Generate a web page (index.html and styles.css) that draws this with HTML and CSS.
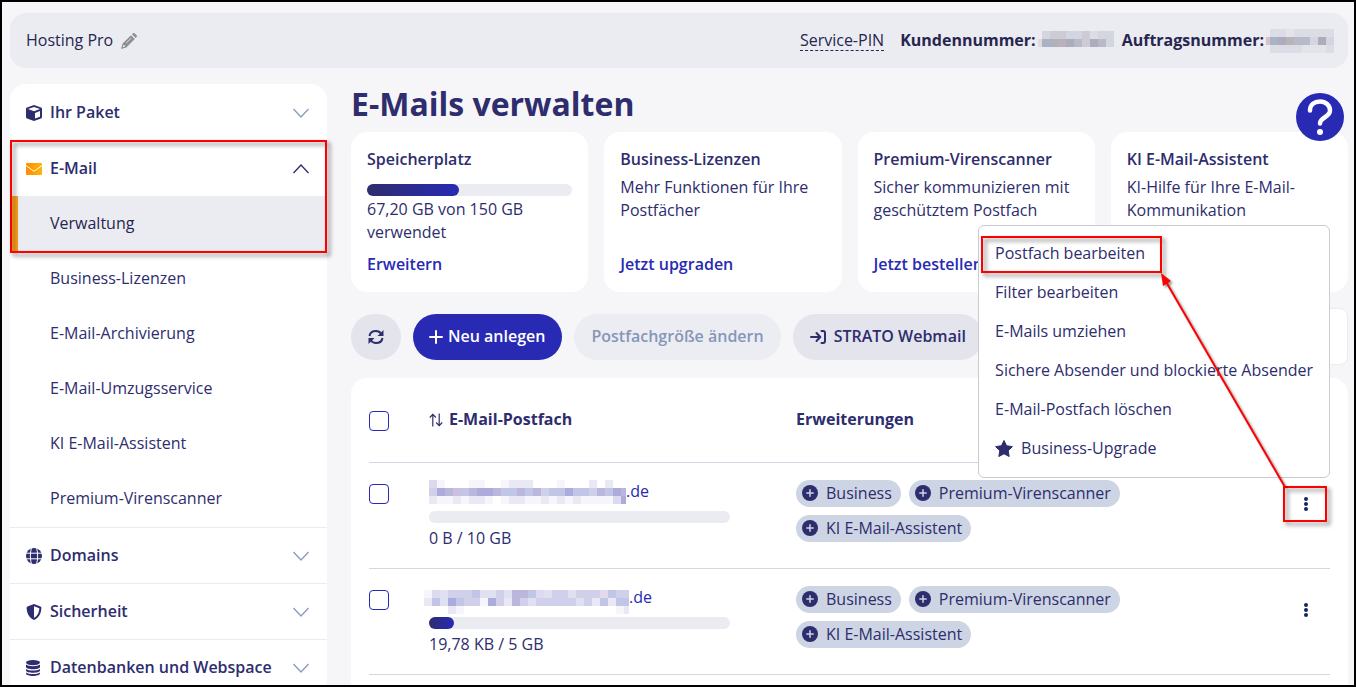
FILE: index.html
```html
<!DOCTYPE html>
<html lang="de">
<head>
    <meta charset="UTF-8">
    <meta name="viewport" content="width=device-width, initial-scale=1.0">
    <title>E-Mails verwalten</title>
    <link rel="stylesheet" href="styles.css">
</head>
<body>
    <!-- Icons -->
    <svg class="icon-defs" aria-hidden="true">
        <symbol id="chevron" viewBox="0 0 16 16"><path d="M0.5 4L8 12L15.5 4" fill="none" stroke="currentColor" stroke-width="1.3"/></symbol>
        <symbol id="plus-circle" viewBox="0 0 16 16"><circle cx="8" cy="8" r="8" fill="currentColor"/><path d="M8 4.8V11.2M4.8 8H11.2" stroke="#cdd4e3" stroke-width="1.5" stroke-linecap="round"/></symbol>
        <symbol id="kebab" viewBox="0 0 4 14"><circle cx="2" cy="2" r="2"/><circle cx="2" cy="7" r="2"/><circle cx="2" cy="12" r="2"/></symbol>
    </svg>

    <div class="page">
        <header class="topbar">
            <div class="package-name">
                Hosting Pro
                <button class="edit-btn" type="button" aria-label="Bearbeiten">
                    <svg viewBox="0 0 16 16" width="16" height="16" fill="#8f9096"><path d="M10.900 1.300l1-.9c.6-.5 1.300-.5 1.900 0l1.800 1.800c.5.6.5 1.300 0 1.900l-1 1zM10 2.200l3.800 3.800-8.500 8.400L0 16l1.600-5.400zM2.400 11.900l-.7 2.300 2.300-.7-.3-1.200-1.100-.2z" fill-rule="evenodd"/><path d="M5 10.200l5-5" stroke="#ebecf2" stroke-width=".8"/></svg>
                </button>
            </div>
            <div class="customer-data">
                <a class="service-pin" href="#">Service-PIN</a>
                <strong>Kundennummer:</strong>
                <span class="mosaic number-a" data-rows=".ijjiijnii plqrokjoki"></span>
                <strong>Auftragsnummer:</strong>
                <span class="mosaic number-b" data-rows=".nnmnnnnn slorkkioi .nnnnmmmn"></span>
            </div>
        </header>

        <div class="layout">
            <nav class="sidebar">
                <section class="nav-group">
                    <button class="nav-head" type="button">
                        <svg class="icon" viewBox="0 0 16 16"><path d="M8 0l7 2.400c.6.200 1 .7 1 1.300v8.600c0 .6-.4 1.100-1 1.300L8 16l-7-2.400c-.6-.2-1-.7-1-1.300V3.700c0-.6.400-1.100 1-1.300z" fill="currentColor"/><path d="M2 4l6-2.100L14 4 8 6.300zM9 8l5-1.900v5.700L9 13.600z" fill="#fff"/></svg>
                        <span>Ihr Paket</span>
                        <svg class="chevron"><use href="#chevron"/></svg>
                    </button>
                </section>
                <section class="nav-group open">
                    <button class="nav-head" type="button" aria-expanded="true">
                        <svg class="icon" viewBox="0 0 16 16"><defs><linearGradient id="orange"><stop stop-color="#ff8c00"/><stop offset="1" stop-color="#ffb40a"/></linearGradient></defs><rect y="2" width="16" height="12" rx="1" fill="url(#orange)"/><path d="M0 4.500L7 9.700q1 .7 2 0L16 4.500" fill="none" stroke="#fff" stroke-width="1"/></svg>
                        <span>E-Mail</span>
                        <svg class="chevron"><use href="#chevron"/></svg>
                    </button>
                    <ul class="nav-list">
                        <li><a class="active" href="#">Verwaltung</a></li>
                        <li><a href="#">Business-Lizenzen</a></li>
                        <li><a href="#">E-Mail-Archivierung</a></li>
                        <li><a href="#">E-Mail-Umzugsservice</a></li>
                        <li><a href="#">KI E-Mail-Assistent</a></li>
                        <li><a href="#">Premium-Virenscanner</a></li>
                    </ul>
                    <span class="marker marker-nav"></span>
                </section>
                <section class="nav-group">
                    <button class="nav-head" type="button">
                        <svg class="icon" viewBox="0 0 16 16"><circle cx="8" cy="8" r="8" fill="currentColor"/><path d="M0 5.200H16M0 10.800H16M5.400 0C4 5 4 11 5.400 16M10.600 0C12 5 12 11 10.600 16" fill="none" stroke="#fff"/></svg>
                        <span>Domains</span>
                        <svg class="chevron"><use href="#chevron"/></svg>
                    </button>
                </section>
                <section class="nav-group">
                    <button class="nav-head" type="button">
                        <svg class="icon" viewBox="0 0 16 16"><path d="M8 0l6.500 2.600c.5.200.9.600.9 1.200C15.300 8.500 13.500 13.500 8 16 2.500 13.500.7 8.500.6 3.800c0-.6.400-1 .9-1.200z" fill="currentColor"/><path d="M8 2.200l5.300 2.100C13.200 8 11.800 11.800 8 13.800z" fill="#fff"/></svg>
                        <span>Sicherheit</span>
                        <svg class="chevron"><use href="#chevron"/></svg>
                    </button>
                </section>
                <section class="nav-group">
                    <button class="nav-head" type="button">
                        <svg class="icon" viewBox="0 0 16 16" fill="currentColor"><ellipse cx="7" cy="2.600" rx="7" ry="2.600"/><path d="M0 4.600c3 2.100 11 2.100 14 0v2.300c0 3-14 3-14 0zM0 9c3 2.100 11 2.100 14 0v1.500c0 3-14 3-14 0zM0 12.500c3 2.100 11 2.100 14 0v1c0 3.300-14 3.300-14 0z"/></svg>
                        <span>Datenbanken und Webspace</span>
                        <svg class="chevron"><use href="#chevron"/></svg>
                    </button>
                </section>
            </nav>

            <main class="content">
                <h1>E-Mails verwalten</h1>
                <button class="help-btn" type="button" aria-label="Hilfe">
                    <svg viewBox="0 0 48 48" width="48" height="48"><path d="M14 17.500C14 11.500 18.500 8.500 24 8.500s10 3.500 10 9c0 7-10 6.500-10 13" fill="none" stroke="#fff" stroke-width="4.500" stroke-linecap="round"/><circle cx="24" cy="39" r="3" fill="#fff"/></svg>
                </button>

                <div class="cards">
                    <section class="card">
                        <h2>Speicherplatz</h2>
                        <div class="bar"><div class="bar-fill" style="width: 44.8%"></div></div>
                        <p>67,20 GB von 150 GB verwendet</p>
                        <a href="#">Erweitern</a>
                    </section>
                    <section class="card">
                        <h2>Business-Lizenzen</h2>
                        <p>Mehr Funktionen für Ihre Postfächer</p>
                        <a href="#">Jetzt upgraden</a>
                    </section>
                    <section class="card">
                        <h2>Premium-Virenscanner</h2>
                        <p>Sicher kommunizieren mit geschütztem Postfach</p>
                        <a href="#">Jetzt bestellen</a>
                    </section>
                    <section class="card">
                        <h2>KI E-Mail-Assistent</h2>
                        <p>KI-Hilfe für Ihre E-Mail-Kommunikation</p>
                        <a href="#">Jetzt bestellen</a>
                    </section>
                </div>

                <div class="toolbar">
                    <button class="btn btn-round" type="button" aria-label="Aktualisieren">
                        <svg viewBox="0 0 16 16" width="16" height="16" fill="none" stroke="currentColor" stroke-width="2"><path d="M1.500 7C2 3.700 4.700 2 8 2c2.300 0 4.200 1.100 5.500 3M14.500 9C14 12.300 11.300 14 8 14c-2.300 0-4.200-1.100-5.500-3"/><path d="M15.500 1v6H9.500zM.5 15V9h6z" fill="currentColor" stroke="none"/></svg>
                    </button>
                    <button class="btn btn-primary" type="button">
                        <svg viewBox="0 0 14 14" width="14" height="14"><path d="M7 1V13M1 7H13" stroke="currentColor" stroke-width="2" stroke-linecap="round"/></svg>
                        Neu anlegen
                    </button>
                    <button class="btn" type="button" disabled>Postfachgröße ändern</button>
                    <button class="btn btn-webmail" type="button">
                        <svg viewBox="0 0 16 14" width="16" height="14" fill="none" stroke="currentColor" stroke-width="2" stroke-linecap="round" stroke-linejoin="round"><path d="M1 7H10M6.500 3L10.300 7 6.500 11M11.500 1H13q2 0 2 2V11q0 2-2 2H11.500"/></svg>
                        STRATO Webmail
                    </button>
                    <input class="search" type="search" aria-label="Suche">
                </div>

                <div class="table-card">
                    <table class="mailboxes">
                        <colgroup>
                            <col class="col-check">
                            <col class="col-mailbox">
                            <col>
                            <col class="col-actions">
                        </colgroup>
                        <thead>
                            <tr>
                                <th><input type="checkbox" aria-label="Alle auswählen"></th>
                                <th>
                                    <button class="sort-btn" type="button">
                                        <svg viewBox="0 0 14 14" width="14" height="14" fill="none" stroke="currentColor" stroke-width="1.200"><path d="M3.800 13.500V1.500M.8 4.500l3-3.200 3 3.200M10.200.5V12.500M7.200 9.500l3 3.200 3-3.200"/></svg>
                                        E-Mail-Postfach
                                    </button>
                                </th>
                                <th>Erweiterungen</th>
                                <th></th>
                            </tr>
                        </thead>
                        <tbody>
                            <tr>
                                <td><input type="checkbox" aria-label="Postfach 1 auswählen"></td>
                                <td>
                                    <a class="mail" href="#"><span class="mosaic mail-a" data-rows="ca...aa..abbb...a...b.b.. dgftefggfeefefdeegeedfegff baababba.abbaabababaaaacg"></span>.de</a>
                                    <div class="bar"></div>
                                    <div class="quota">0 B / 10 GB</div>
                                </td>
                                <td>
                                    <div class="chips">
                                        <button class="chip" type="button"><svg><use href="#plus-circle"/></svg>Business</button>
                                        <button class="chip" type="button"><svg><use href="#plus-circle"/></svg>Premium-Virenscanner</button>
                                        <button class="chip" type="button"><svg><use href="#plus-circle"/></svg>KI E-Mail-Assistent</button>
                                    </div>
                                </td>
                                <td>
                                    <div class="actions">
                                        <button class="kebab" type="button" aria-label="Aktionen" aria-expanded="true"><svg><use href="#kebab"/></svg></button>
                                        <span class="marker"></span>
                                        <ul class="menu">
                                            <li><a href="#">Postfach bearbeiten</a><span class="marker marker-menu"></span></li>
                                            <li><a href="#">Filter bearbeiten</a></li>
                                            <li><a href="#">E-Mails umziehen</a></li>
                                            <li><a href="#">Sichere Absender und blockierte Absender</a></li>
                                            <li><a href="#">E-Mail-Postfach löschen</a></li>
                                            <li><a href="#"><svg viewBox="0 0 18 17" width="18" height="17"><path d="M9 .5l2.600 5.300 5.800.8-4.200 4.100 1 5.800L9 13.800l-5.200 2.700 1-5.800L.6 6.600l5.800-.8z" fill="currentColor" stroke="currentColor" stroke-linejoin="round"/></svg>Business-Upgrade</a></li>
                                        </ul>
                                        <svg class="arrow" viewBox="0 0 124 214"><path d="M124 214L4 7" stroke="#f00" stroke-width="2"/><path d="M0 0L10 8 2 13z" fill="#f00"/></svg>
                                    </div>
                                </td>
                            </tr>
                            <tr>
                                <td><input type="checkbox" aria-label="Postfach 2 auswählen"></td>
                                <td>
                                    <a class="mail" href="#"><span class="mosaic mail-b" data-rows="achdddehhdhffechddhddduedd behgeddagdbfdhdddddhdbebee ...ba...................ab"></span>.de</a>
                                    <div class="bar"><div class="bar-fill bar-min"></div></div>
                                    <div class="quota">19,78 KB / 5 GB</div>
                                </td>
                                <td>
                                    <div class="chips">
                                        <button class="chip" type="button"><svg><use href="#plus-circle"/></svg>Business</button>
                                        <button class="chip" type="button"><svg><use href="#plus-circle"/></svg>Premium-Virenscanner</button>
                                        <button class="chip" type="button"><svg><use href="#plus-circle"/></svg>KI E-Mail-Assistent</button>
                                    </div>
                                </td>
                                <td>
                                    <div class="actions">
                                        <button class="kebab" type="button" aria-label="Aktionen"><svg><use href="#kebab"/></svg></button>
                                    </div>
                                </td>
                            </tr>
                        </tbody>
                    </table>
                </div>
            </main>
        </div>
    </div>
    <script src="script.js"></script>
</body>
</html>
```
FILE: styles.css
```css
* {
    box-sizing: border-box;
}

body {
    margin: 0;
    font-family: "Open Sans", "Noto Sans", sans-serif;
    font-size: 16px;
    line-height: 23px;
    color: #2e2d6e;
    background-color: #f6f6f9;
}

button,
input {
    font: inherit;
    color: inherit;
}

button {
    border: 0;
    padding: 0;
    background: none;
    cursor: pointer;
}

a {
    color: inherit;
    text-decoration: none;
}

ul {
    list-style: none;
    margin: 0;
    padding: 0;
}

svg {
    display: block;
    flex: none;
}

.icon-defs {
    position: absolute;
    width: 0;
    height: 0;
}

.page {
    height: 100vh;
    overflow: hidden;
    border: 2px solid #000;
    padding: 11px 6px 0 8px;
}

/* Kopfzeile */
.topbar {
    display: flex;
    justify-content: space-between;
    align-items: center;
    height: 55px;
    padding: 0 14px 0 16px;
    border-radius: 16px;
    background-color: #ebecf2;
    color: #27264f;
}

.package-name,
.customer-data {
    display: flex;
    align-items: center;
}

.package-name {
    gap: 8px;
}

.service-pin {
    border-bottom: 1px dashed #27264f;
    line-height: 19px;
    margin-right: 16px;
}

.mosaic {
    display: flex;
    overflow: hidden;
}

.mosaic svg {
    shape-rendering: crispEdges;
}

.number-a,
.number-b {
    justify-content: flex-end;
}

.number-a {
    width: 76px;
    margin: 0 8px 4px 2px;
}

.number-b {
    width: 68px;
    margin-left: 2px;
}

.layout {
    display: grid;
    grid-template-columns: 317px minmax(0, 1fr);
    align-items: start;
    gap: 24px;
    margin-top: 16px;
}

/* Navigation */
.sidebar {
    padding-top: 1px;
    border-radius: 16px;
    background-color: #fff;
}

.nav-group {
    position: relative;
}

.nav-group + .nav-group {
    border-top: 1px solid #ebebed;
}

.nav-group.open {
    z-index: 1;
}

.nav-head {
    display: flex;
    align-items: center;
    gap: 8px;
    width: 100%;
    height: 55px;
    padding: 0 18px 0 16px;
    font-weight: 600;
    text-align: left;
}

.nav-head span {
    flex: 1;
}

.icon,
.chevron {
    width: 16px;
    height: 16px;
}

.chevron {
    color: #8a9abf;
}

.open .chevron {
    color: #2e2d6e;
    transform: rotate(180deg);
}

.nav-list {
    padding-bottom: 1px;
}

.nav-list a {
    display: flex;
    align-items: center;
    height: 55px;
    padding-left: 40px;
}

.nav-list .active {
    padding-left: 32px;
    border-left: 8px solid #ffa41f;
    background-color: #ebecf2;
    color: #27264f;
}

/* Rote Hervorhebung */
.marker {
    position: absolute;
    inset: 0;
    border: 2px solid #f00;
    filter: drop-shadow(3px 3px 2px rgba(0, 0, 0, 0.5));
    pointer-events: none;
}

.marker-nav {
    top: -1px;
    bottom: auto;
    height: 113px;
}

/* Inhalt */
.content {
    position: relative;
}

h1 {
    margin: 0 0 8px;
    font-size: 32px;
    line-height: 40px;
    font-weight: 700;
}

.help-btn {
    position: absolute;
    top: 9px;
    right: 4px;
    border-radius: 50%;
    background-color: #282ab4;
}

.cards {
    display: grid;
    grid-template-columns: repeat(4, minmax(0, 1fr));
    gap: 16px;
}

.card {
    display: flex;
    flex-direction: column;
    align-items: flex-start;
    min-height: 160px;
    padding: 16px;
    border-radius: 16px;
    background-color: #fff;
}

.card h2 {
    margin: 0 0 5px;
    font-size: 16px;
    line-height: 23px;
    font-weight: 600;
}

.card p {
    margin: 0;
}

.card a {
    margin-top: auto;
    font-weight: 600;
    color: #282ab4;
}

.bar {
    width: 100%;
    height: 12px;
    border-radius: 6px;
    background-color: #ebecf2;
}

.card .bar {
    margin: 8px 0 2px;
}

.bar-fill {
    height: 100%;
    border-radius: 6px;
    background: linear-gradient(90deg, #2e2d6e, #282ab4);
}

.bar-min {
    width: 25px;
}

.toolbar {
    display: flex;
    align-items: center;
    gap: 12px;
    margin: 16px 0 13px;
}

.btn {
    display: flex;
    align-items: center;
    gap: 5px;
    height: 46px;
    padding: 0 17px;
    border-radius: 23px;
    background-color: #e3e4ec;
    font-weight: 600;
    white-space: nowrap;
}

.btn-primary {
    padding: 0 17px 0 16px;
    background-color: #282ab4;
    color: #fff;
}

.btn-webmail {
    gap: 8px;
}

.btn:disabled {
    background-color: #ecedf2;
    color: #8696b8;
}

.search {
    flex: 1;
    min-width: 0;
    height: 57px;
    padding: 0 16px;
    border: 1px solid #ebecf2;
    border-radius: 8px;
    background-color: #fff;
}

/* Postfachtabelle */
.table-card {
    padding: 0 18px 40px;
    border-radius: 16px;
    background-color: #fff;
}

.mailboxes {
    width: 100%;
    table-layout: fixed;
    border-collapse: collapse;
}

.col-check {
    width: 60px;
}

.col-mailbox {
    width: 367px;
}

.col-actions {
    width: 47px;
}

.mailboxes tr {
    border-bottom: 1px solid #d5d5e3;
}

.mailboxes th {
    height: 84px;
    padding: 0;
    text-align: left;
    font-weight: 700;
}

.mailboxes td {
    height: 106px;
    padding: 17px 0;
    vertical-align: top;
}

.mailboxes input {
    display: block;
    appearance: none;
    width: 20px;
    height: 20px;
    margin: 4px 0 0;
    border: 1px solid #282ab4;
    border-radius: 4px;
    background-color: #fff;
}

.mailboxes th input {
    margin-top: 2px;
}

.sort-btn {
    display: flex;
    align-items: center;
    gap: 6px;
    font-weight: 700;
}

.mail {
    display: flex;
    align-items: flex-start;
    height: 24px;
    color: #282ab4;
}

.mail-a {
    width: 197px;
}

.mail-b {
    width: 205px;
    margin: 4px 0 0 -5px;
}

td .bar {
    width: 82%;
    margin: 7px 0 4px;
}

.chips {
    display: flex;
    flex-wrap: wrap;
    gap: 8px;
}

.chip {
    display: flex;
    align-items: center;
    gap: 8px;
    height: 27px;
    padding: 0 9px 0 6px;
    border-radius: 14px;
    background-color: #cdd4e3;
}

.chip svg {
    width: 16px;
    height: 16px;
}

.actions {
    position: relative;
    width: 44px;
    margin-top: 6px;
}

.kebab {
    display: flex;
    align-items: center;
    justify-content: center;
    width: 100%;
    height: 36px;
    padding-left: 2px;
    color: #12285c;
}

.kebab svg {
    width: 4px;
    height: 14px;
    fill: currentColor;
}

.menu {
    position: absolute;
    right: -3px;
    bottom: calc(100% + 8px);
    padding: 8px 0 9px;
    border: 1px solid #cbcbd0;
    border-radius: 6px;
    background-color: #fff;
    white-space: nowrap;
}

.menu li {
    position: relative;
}

.menu a {
    display: flex;
    align-items: center;
    gap: 8px;
    padding: 8px 16px;
}

.marker-menu {
    inset: 2px auto 0 2px;
    width: 181px;
}

.arrow {
    position: absolute;
    right: 42px;
    bottom: calc(100% - 1px);
    width: 124px;
    height: 214px;
    overflow: visible;
    filter: drop-shadow(2px 2px 1px rgba(0, 0, 0, 0.4));
    pointer-events: none;
}
```
FILE: script.js
```js
// Unkenntlich gemachte Angaben als Kacheln zeichnen
const CELL = 8;
const COLORS = {
    a: '#f5f5fb', b: '#e9e8f4', c: '#dcdaee', d: '#d0d0ea',
    e: '#c1c5e6', f: '#bbb6dc', g: '#acabdb', h: '#dfe1f3',
    i: '#d3d5df', j: '#cdcbd5', k: '#b9bac9', l: '#a9b2c6',
    m: '#e3e3ea', n: '#dbdce5', o: '#acacbd', p: '#e3d9d9',
    q: '#b0b0be', r: '#b9b2bc', s: '#d5c4c4', t: '#cbc0e0',
    u: '#e0daea'
};

document.querySelectorAll('.mosaic').forEach(el => {
    const rows = el.dataset.rows.split(' ');
    const width = rows[0].length * CELL;
    const height = rows.length * CELL;
    let rects = '';
    rows.forEach((row, y) => {
        [...row].forEach((key, x) => {
            if (COLORS[key]) {
                rects += `<rect x="${x * CELL}" y="${y * CELL}" width="${CELL}" height="${CELL}" fill="${COLORS[key]}"/>`;
            }
        });
    });
    el.innerHTML = `<svg width="${width}" height="${height}">${rects}</svg>`;
});
```
